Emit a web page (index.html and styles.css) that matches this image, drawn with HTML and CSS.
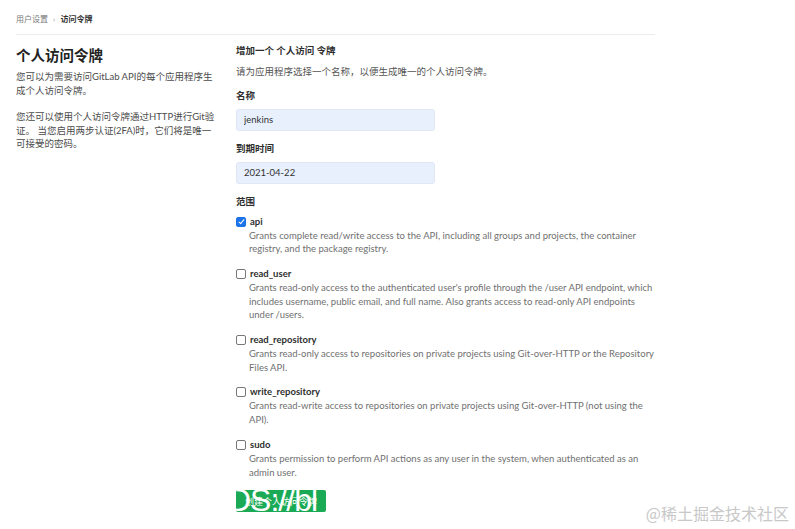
FILE: index.html
```html
<!DOCTYPE html>
<html lang="zh-CN">
<head>
    <meta charset="UTF-8">
    <meta name="viewport" content="width=device-width, initial-scale=1.0">
    <title>个人访问令牌</title>
    <link rel="stylesheet" href="styles.css">
</head>
<body>
    <div class="page">
        <div class="breadcrumb">
            <span class="crumb">用户设置</span>
            <span class="sep">›</span>
            <span class="crumb current">访问令牌</span>
        </div>
        <div class="layout">
            <div class="side">
                <h1>个人访问令牌</h1>
                <p>您可以为需要访问GitLab API的每个应用程序生成个人访问令牌。</p>
                <p>您还可以使用个人访问令牌通过HTTP进行Git验证。 当您启用两步认证(2FA)时，它们将是唯一可接受的密码。</p>
            </div>
            <div class="main">
                <h2>增加一个 个人访问 令牌</h2>
                <p class="hint">请为应用程序选择一个名称，以便生成唯一的个人访问令牌。</p>

                <label class="field-label">名称</label>
                <input class="field" type="text" value="jenkins">

                <label class="field-label">到期时间</label>
                <input class="field" type="text" value="2021-04-22">

                <label class="field-label">范围</label>
                <div class="scopes">
                    <div class="scope">
                        <label class="scope-name"><span class="box checked"></span>api</label>
                        <p class="scope-desc">Grants complete read/write access to the API, including all groups and projects, the container registry, and the package registry.</p>
                    </div>
                    <div class="scope">
                        <label class="scope-name"><span class="box"></span>read_user</label>
                        <p class="scope-desc">Grants read-only access to the authenticated user's profile through the /user API endpoint, which includes username, public email, and full name. Also grants access to read-only API endpoints under /users.</p>
                    </div>
                    <div class="scope">
                        <label class="scope-name"><span class="box"></span>read_repository</label>
                        <p class="scope-desc">Grants read-only access to repositories on private projects using Git-over-HTTP or the Repository Files API.</p>
                    </div>
                    <div class="scope">
                        <label class="scope-name"><span class="box"></span>write_repository</label>
                        <p class="scope-desc">Grants read-write access to repositories on private projects using Git-over-HTTP (not using the API).</p>
                    </div>
                    <div class="scope">
                        <label class="scope-name"><span class="box"></span>sudo</label>
                        <p class="scope-desc">Grants permission to perform API actions as any user in the system, when authenticated as an admin user.</p>
                    </div>
                </div>

                <button class="create">创建个人访问令牌<span class="smear">DS://bl</span></button>
            </div>
        </div>
    </div>
    <div class="watermark">@稀土掘金技术社区</div>
</body>
</html>
```

FILE: styles.css
```css
body {
    margin: 0;
    background: #fff;
    font-family: Lato, "Noto Sans CJK SC", sans-serif;
    font-size: 9.5px;
    color: #2e2e2e;
}
.page {
    width: 639px;
    padding: 0 16px;
}
.breadcrumb {
    height: 35px;
    box-sizing: border-box;
    padding-top: 12px;
    line-height: 14px;
    font-size: 8px;
    border-bottom: 1px solid #ececec;
}
.crumb {
    color: #777;
}
.crumb.current {
    color: #333;
    font-weight: bold;
}
.sep {
    color: #999;
    margin: 0 3px;
}
.layout {
    display: flex;
    gap: 17px;
}
.side {
    width: 203px;
}
.side h1 {
    margin: 11px 0 0;
    font-size: 14.5px;
    line-height: 20px;
    color: #222;
}
.side p {
    margin: 4px 0 13px;
    line-height: 13.5px;
    color: #4c4c4c;
}
.main {
    flex: 1;
    padding-top: 9px;
}
.main h2 {
    margin: 0;
    font-size: 9.5px;
    line-height: 14px;
    color: #2e2e2e;
}
.hint {
    margin: 7px 0 10px;
    line-height: 13.5px;
    color: #555;
}
.field-label {
    display: block;
    font-weight: bold;
    line-height: 14px;
    margin-bottom: 6px;
}
.field {
    display: block;
    width: 199px;
    height: 22px;
    box-sizing: border-box;
    margin: 0 0 11px;
    padding: 0 7px;
    border: 1px solid #e0e7f3;
    border-radius: 3px;
    background: #e8f0fe;
    font: inherit;
    color: #333;
}
.scopes {
    margin-top: 4px;
}
.scope {
    margin-bottom: 11px;
}
.scope-name {
    display: flex;
    align-items: center;
    gap: 4px;
    line-height: 14px;
    font-weight: bold;
    color: #2e2e2e;
}
.box {
    width: 8px;
    height: 8px;
    border: 1px solid #777;
    border-radius: 2px;
    background: #fff;
    position: relative;
}
.box.checked {
    background: #1a73e8;
    border-color: #1a73e8;
}
.box.checked::after {
    content: "";
    position: absolute;
    left: 2.5px;
    top: 0.5px;
    width: 2px;
    height: 5px;
    border: solid #fff;
    border-width: 0 1.5px 1.5px 0;
    transform: rotate(40deg);
}
.scope-desc {
    margin: 0 0 0 13px;
    line-height: 13.7px;
    color: #707070;
}
.create {
    position: relative;
    overflow: hidden;
    width: 90px;
    height: 22px;
    margin-top: 0;
    padding: 0;
    border: none;
    border-radius: 2px;
    background: #1aaa55;
    color: #fff;
    font: inherit;
    font-size: 9px;
}
.smear {
    position: absolute;
    left: -8px;
    top: -6px;
    font-family: "Liberation Sans", sans-serif;
    font-size: 32px;
    line-height: 32px;
    color: #fff;
    letter-spacing: -1px;
    white-space: nowrap;
}
.watermark {
    position: absolute;
    right: 6px;
    bottom: 4px;
    font-family: "Noto Sans CJK SC", sans-serif;
    font-size: 16px;
    color: #c8c8c8;
}
```
